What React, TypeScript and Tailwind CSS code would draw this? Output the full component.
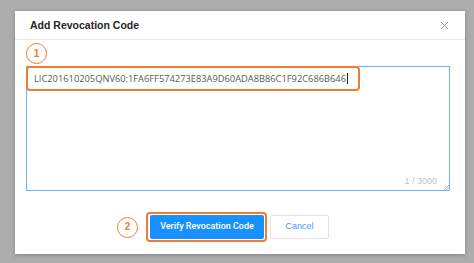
import { X } from 'lucide-react';

function Marker({ n }: { n: number }) {
  return (
    <span className="w-[21px] h-[21px] rounded-full border-[1.5px] border-[#ed7d31] bg-white text-[#ed7d31] text-[10px] font-bold flex items-center justify-center shrink-0 leading-none">
      {n}
    </span>
  );
}

export default function App() {
  return (
    <div className="w-[474px] h-[263px] bg-[#adadad] pt-[11px] pl-[15px] font-['Liberation_Sans',Arial,sans-serif]">
      <div className="w-[450px] h-[243px] bg-white shadow-[0_1px_4px_rgba(0,0,0,0.25)] flex flex-col">
        {/* Header */}
        <div className="h-[29px] px-[15px] pt-[1px] flex items-center justify-between border-b border-[#e8e8e8]">
          <h2 className="text-[10.5px] font-bold text-[#262626]">Add Revocation Code</h2>
          <X className="w-[13px] h-[13px] text-[#7a7a7a] mr-[-1px]" strokeWidth={1.4} />
        </div>

        {/* Body */}
        <div className="pl-[11px] pr-[15px]">
          <div className="mt-[3px]">
            <Marker n={1} />
          </div>
          <div className="relative mt-[2px] h-[125px] border border-[#6cb2f7]">
            {/* highlighted first line */}
            <div className="absolute left-[-1px] top-[-1px] w-[334px] h-[25px] border-2 border-[#ed7d31] rounded-[4px] bg-white" />
            <div className="relative pl-[7px] pt-[5px] text-[9.3px] text-[#595959] font-['Open_Sans',sans-serif] flex items-center">
              <span>LIC201610205QNV60:1FA6FF574273E83A9D60ADA8B86C1F92C686B646</span>
              <span className="inline-block w-px h-[11px] bg-[#222] ml-px" />
            </div>
            <span className="absolute right-[12px] bottom-[2px] text-[9px] text-[#bfbfbf]">1 / 3000</span>
            <svg className="absolute right-0 bottom-0 w-[6px] h-[6px]" viewBox="0 0 6 6">
              <path d="M1 6 L6 1 M3.5 6 L6 3.5" stroke="#9a9a9a" strokeWidth="0.8" />
            </svg>
          </div>
        </div>

        {/* Footer */}
        <div className="mt-[21px] pl-[102px] flex items-center">
          <Marker n={2} />
          <div className="ml-[8px] w-[121px] h-[30px] border-2 border-[#ed7d31] rounded-[4px] pl-[2px] flex items-center">
            <button className="w-[114px] h-[24px] bg-[#1890ff] rounded-[2px] text-white text-[9px] font-['Roboto',sans-serif] font-medium">
              Verify Revocation Code
            </button>
          </div>
          <button className="ml-[3px] w-[59px] h-[24px] border border-[#e3e3e3] rounded-[2px] bg-white text-[#4a9bf0] text-[9px]">
            Cancel
          </button>
        </div>
      </div>
    </div>
  );
}
